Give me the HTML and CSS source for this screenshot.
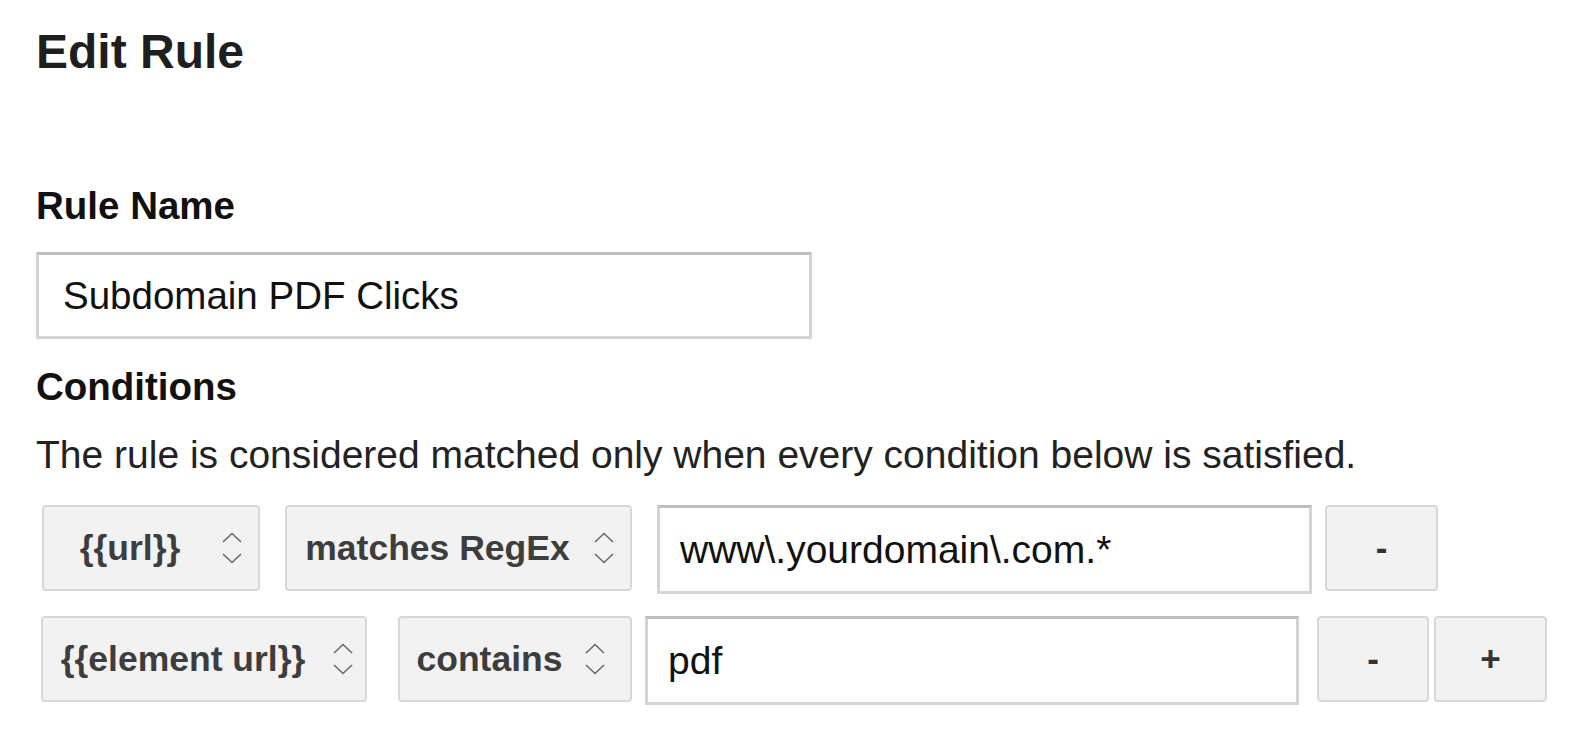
FILE: index.html
```html
<!DOCTYPE html>
<html lang="en">
<head>
  <meta charset="UTF-8" />
  <meta name="viewport" content="width=device-width, initial-scale=1.0" />
  <title>Edit Rule</title>
  <link rel="stylesheet" href="styles.css">
</head>
<body>
  <h1 class="title">Edit Rule</h1>

  <label class="field-label" for="rule-name">Rule Name</label>
  <input id="rule-name" class="name-input" type="text" value="Subdomain PDF Clicks" />

  <h2 class="section">Conditions</h2>
  <p class="hint">The rule is considered matched only when every condition below is satisfied.</p>

  <div class="cond-row">
    <div class="picker pick-url">
      <span class="picker-text">{{url}}</span>
      <svg class="chev" width="20" height="32" viewBox="0 0 20 32"><polyline points="1,10 10,1.5 19,10" /><polyline points="1,22 10,30.5 19,22" /></svg>
    </div>
    <div class="picker pick-regex">
      <span class="picker-text">matches RegEx</span>
      <svg class="chev" width="20" height="32" viewBox="0 0 20 32"><polyline points="1,10 10,1.5 19,10" /><polyline points="1,22 10,30.5 19,22" /></svg>
    </div>
    <input class="cond-input in-first" type="text" value="www\.yourdomain\.com.*" />
    <button class="row-btn btn-first">-</button>
  </div>

  <div class="cond-row">
    <div class="picker pick-element">
      <span class="picker-text">{{element url}}</span>
      <svg class="chev" width="20" height="32" viewBox="0 0 20 32"><polyline points="1,10 10,1.5 19,10" /><polyline points="1,22 10,30.5 19,22" /></svg>
    </div>
    <div class="picker pick-contains">
      <span class="picker-text">contains</span>
      <svg class="chev" width="20" height="32" viewBox="0 0 20 32"><polyline points="1,10 10,1.5 19,10" /><polyline points="1,22 10,30.5 19,22" /></svg>
    </div>
    <input class="cond-input in-second" type="text" value="pdf" />
    <button class="row-btn btn-minus">-</button>
    <button class="row-btn btn-plus">+</button>
  </div>
</body>
</html>
```

FILE: styles.css
```css
body { margin: 0; padding: 0 0 0 36px; font-family: "Liberation Sans", Arial, sans-serif; color: #1a1a1a; background: #fff; }

.title { margin: 24px 0 0; font-size: 48px; line-height: 56px; font-weight: bold; color: #1e1e1e; }
.field-label { display: block; margin-top: 104px; font-size: 38.5px; line-height: 44px; font-weight: bold; color: #111; }
.name-input { display: block; box-sizing: border-box; width: 776px; height: 87px; margin-top: 24px; padding: 0 0 0 24px; border: 3px solid #d4d4d4; border-top-color: #bdbdbd; font-family: inherit; font-size: 38.5px; color: #111; outline: none; }
.section { margin: 26px 0 0; font-size: 38.5px; line-height: 44px; font-weight: bold; color: #111; }
.hint { margin: 23px 0 0; font-size: 39px; line-height: 46px; color: #222; }

.cond-row { display: flex; align-items: flex-start; margin: 27px 0 0 6px; }
.cond-row + .cond-row { margin-top: 22px; margin-left: 5px; }

.picker { display: flex; align-items: center; box-sizing: border-box; height: 86px; padding: 0 16px 0 4px; background: #f2f2f2; border: 2px solid #d8d8d8; border-radius: 4px; color: #3d3d3d; font-size: 35.5px; font-weight: bold; }
.picker-text { flex: 1; text-align: center; white-space: nowrap; }
.chev { flex: none; margin-left: 10px; }
.chev polyline { fill: none; stroke: #6a6a6a; stroke-width: 1.6; }

.pick-url { width: 218px; margin-right: 25px; }
.pick-regex { width: 347px; margin-right: 25px; }
.pick-element { width: 326px; margin-right: 31px; padding-left: 0; padding-right: 12px; }
.pick-contains { width: 234px; margin-right: 13px; padding-right: 25px; }

.cond-input { box-sizing: border-box; height: 89px; padding: 0 0 0 20px; border: 3px solid #d4d4d4; border-top-color: #bdbdbd; font-family: inherit; font-size: 39px; color: #111; outline: none; }
.in-first { width: 655px; margin-right: 13px; }
.in-second { width: 654px; margin-right: 18px; }

.row-btn { box-sizing: border-box; width: 113px; height: 86px; padding: 0; background: #f2f2f2; border: 2px solid #d8d8d8; border-radius: 4px; font-family: inherit; font-size: 35px; font-weight: bold; color: #333; }
.btn-minus { width: 112px; margin-right: 5px; }
```
